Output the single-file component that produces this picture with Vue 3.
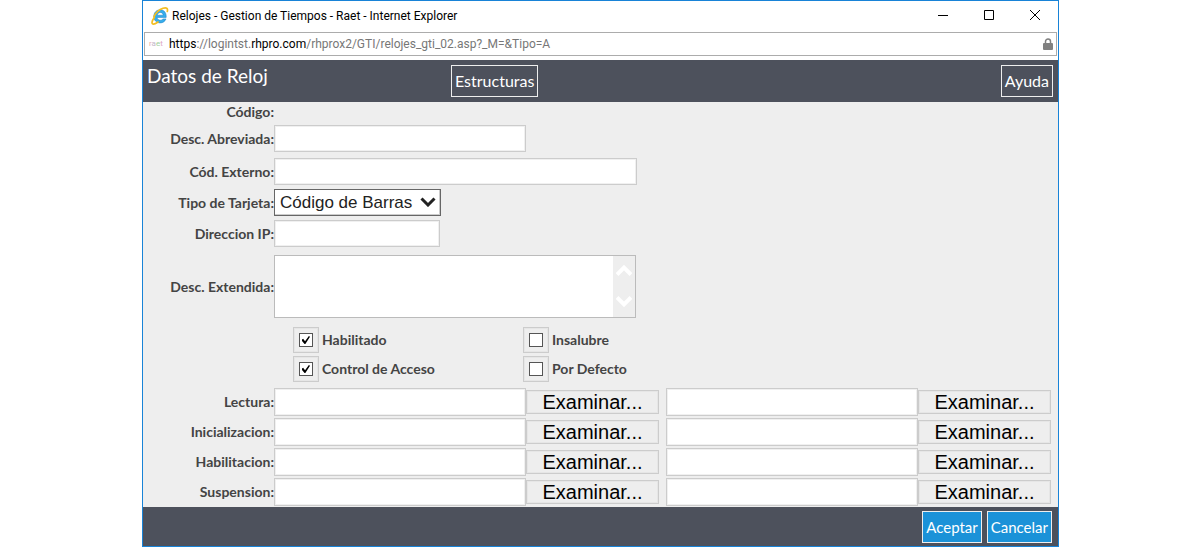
<script setup>
import { ref } from 'vue'

const form = ref({ abbr: '', external: '', card: 'Código de Barras', ip: '', extended: '' })

const checks = ref([
  [
    { id: 'habilitado', label: 'Habilitado', on: true },
    { id: 'insalubre', label: 'Insalubre', on: false },
  ],
  [
    { id: 'control', label: 'Control de Acceso', on: true },
    { id: 'defecto', label: 'Por Defecto', on: false },
  ],
])

const files = [
  { id: 'lectura', label: 'Lectura' },
  { id: 'inicializacion', label: 'Inicializacion' },
  { id: 'habilitacion', label: 'Habilitacion' },
  { id: 'suspension', label: 'Suspension' },
]
</script>

<template>
  <div class="desktop">
    <main class="window">
      <header class="titlebar">
        <svg class="ie" viewBox="0 0 18 18" aria-hidden="true">
          <path d="M15.2 10.4H6.1c.2 1.7 1.4 2.8 3.2 2.8 1.200 0 2.100-.4 2.700-1.300h3c-1 2.600-3.100 4-5.900 4-3.700 0-6.300-2.700-6.300-6.400 0-3.900 2.700-6.700 6.400-6.700 3.900 0 6.300 2.900 6 7.600zM6.200 8.200h6c-.2-1.700-1.300-2.700-3-2.700-1.600 0-2.700 1-3 2.700z" fill="#35aeec" stroke="#187bc0" stroke-width=".5" />
          <path d="M3.300 10.500C.8 14 .5 16.500 1.800 17c1.200.4 3.300-.7 5.200-2M3 9.500C5 5.500 8.500 2.500 12 1.300c3.300-1.100 5.200-.2 4.300 3.200" fill="none" stroke="#f3bd20" stroke-width="1.700" stroke-linecap="round" />
        </svg>
        <span class="caption">Relojes - Gestion de Tiempos - Raet - Internet Explorer</span>
        <button class="win" type="button" aria-label="Minimizar">
          <svg viewBox="0 0 12 12"><path d="M1 5.500h10" /></svg>
        </button>
        <button class="win" type="button" aria-label="Maximizar">
          <svg viewBox="0 0 12 12"><path d="M1.500 .5h9v9h-9z" /></svg>
        </button>
        <button class="win" type="button" aria-label="Cerrar">
          <svg viewBox="0 0 12 12"><path d="M1 0l10 10M11 0L1 10" /></svg>
        </button>
      </header>

      <div class="address">
        <span class="favicon"><i>r</i><b>a</b><u>e</u><s>t</s></span>
        <span class="url"><em>https</em>://logintst.<em>rhpro.com</em>/rhprox2/GTI/relojes_gti_02.asp?_M=&amp;Tipo=A</span>
        <svg class="lock" viewBox="0 0 10 12" aria-hidden="true">
          <path d="M2.500 6V3.500a2.500 2.500 0 0 1 5 0V6" fill="none" stroke="#808080" stroke-width="1.500" />
          <rect y="5" width="10" height="7" rx="1" fill="#808080" />
        </svg>
      </div>

      <div class="toolbar">
        <h1>Datos de Reloj</h1>
        <button class="outline" type="button">Estructuras</button>
        <button class="outline help" type="button">Ayuda</button>
      </div>

      <form class="form" @submit.prevent>
        <div class="row code"><span class="label">Código:</span></div>
        <div class="row abbr">
          <label class="label" for="abbr">Desc. Abreviada:</label>
          <input id="abbr" v-model="form.abbr" class="field medium" type="text" />
        </div>
        <div class="row">
          <label class="label" for="external">Cód. Externo:</label>
          <input id="external" v-model="form.external" class="field wide" type="text" />
        </div>
        <div class="row">
          <label class="label" for="card">Tipo de Tarjeta:</label>
          <div class="picker">
            <select id="card" v-model="form.card">
              <option>Código de Barras</option>
            </select>
            <svg viewBox="0 0 16 10" aria-hidden="true"><path d="M1.500 1.500L8 8l6.500-6.500" /></svg>
          </div>
        </div>
        <div class="row ip">
          <label class="label" for="ip">Direccion IP:</label>
          <input id="ip" v-model="form.ip" class="field small" type="text" />
        </div>
        <div class="row">
          <label class="label" for="extended">Desc. Extendida:</label>
          <div class="memo">
            <textarea id="extended" v-model="form.extended"></textarea>
            <div class="scroll" aria-hidden="true">
              <svg viewBox="0 0 16 13"><path d="M1 10.500L8 3.500l7 7" /></svg>
              <svg viewBox="0 0 16 13"><path d="M1 1.500l7 7 7-7" /></svg>
            </div>
          </div>
        </div>

        <div class="checks">
          <div v-for="(line, i) in checks" :key="i" class="line">
            <div v-for="c in line" :key="c.id" class="check">
              <input :id="c.id" v-model="c.on" type="checkbox" />
              <label :for="c.id">{{ c.label }}</label>
            </div>
          </div>
        </div>

        <div class="files">
          <div v-for="f in files" :key="f.id" class="row">
            <label class="label" :for="f.id">{{ f.label }}:</label>
            <div class="pair">
              <div class="file">
                <input :id="f.id" class="field" type="text" />
                <button type="button">Examinar...</button>
              </div>
              <div class="file">
                <input class="field" type="text" :aria-label="f.label" />
                <button type="button">Examinar...</button>
              </div>
            </div>
          </div>
        </div>
      </form>

      <footer class="footer">
        <button class="outline action" type="button">Aceptar</button>
        <button class="outline action" type="button">Cancelar</button>
      </footer>
    </main>
  </div>
</template>

<style>
body {
  margin: 0;
  background: #fff;
}
</style>

<style scoped>
* {
  box-sizing: border-box;
}
.desktop {
  padding: 0 141px 0 142px;
}
.window {
  border: 1px solid #1883d7;
  background: #fff;
  font-family: Lato, "Liberation Sans", sans-serif;
  color: #444;
}
button,
input,
select,
textarea {
  margin: 0;
  border-radius: 0;
  font-family: inherit;
}
.titlebar {
  display: flex;
  align-items: center;
  height: 31px;
  padding: 0 0 2px 8px;
  font-family: Roboto, sans-serif;
  font-size: 12px;
  color: #000;
}
.ie {
  width: 18px;
  height: 18px;
}
.caption {
  flex: 1;
  padding-left: 3px;
  white-space: nowrap;
}
.win {
  display: flex;
  align-items: center;
  justify-content: center;
  width: 46px;
  height: 28px;
  padding: 0;
  border: 0;
  background: none;
}
.win svg {
  width: 12px;
  height: 12px;
  fill: none;
  stroke: #000;
  stroke-width: 1;
}
.address {
  display: flex;
  align-items: center;
  height: 24px;
  margin: 0 1px 4px;
  padding: 0 3px 0 4px;
  border: 1px solid #acacac;
  font-family: Roboto, sans-serif;
  font-size: 12px;
  color: #777;
}
.favicon {
  width: 20px;
  font-size: 8px;
  line-height: 12px;
}
.favicon * {
  font-style: normal;
  font-weight: 400;
  text-decoration: none;
}
.favicon i { color: #e8a9a9; }
.favicon b { color: #c3b6c9; }
.favicon u { color: #9fcf9b; }
.favicon s { color: #e0a6c4; }
.url {
  flex: 1;
  white-space: nowrap;
}
.url em {
  font-style: normal;
  color: #000;
}
.lock {
  width: 10px;
  height: 12px;
}
.toolbar {
  display: flex;
  align-items: flex-start;
  height: 42px;
  padding: 5px 5px 0 4px;
  background: #4d515c;
}
h1 {
  width: 304px;
  margin: 0;
  font-size: 19px;
  font-weight: 400;
  line-height: 22px;
  color: #fff;
}
.outline {
  height: 32px;
  padding: 0 3px;
  border: 1px solid #eee;
  background: none;
  font-size: 16px;
  line-height: 30px;
  color: #fff;
}
.help {
  margin-left: auto;
}
.form {
  padding-bottom: 1px;
  background: #eee;
}
.row {
  display: flex;
  align-items: center;
  margin-bottom: 4px;
}
.code {
  height: 20px;
  margin-bottom: 3px;
}
.abbr {
  margin-bottom: 6px;
}
.ip {
  margin-bottom: 8px;
}
.label {
  flex: none;
  width: 131px;
  text-align: right;
  white-space: nowrap;
}
.label,
.check label {
  font-size: 14px;
  font-weight: 700;
  line-height: 18px;
}
.field {
  height: 27px;
  padding: 0 4px;
  border: 1px solid #ccc;
  background: #fff;
  box-shadow: inset 0 0 0 1px #f0f0f0;
  font-size: 16px;
}
.small { width: 166px; }
.medium { width: 252px; }
.wide { width: 363px; }
.picker {
  position: relative;
}
.picker select {
  display: block;
  width: 167px;
  height: 27px;
  padding: 0 0 0 5px;
  border: 1px solid #666;
  appearance: none;
  background: #fff;
  box-shadow: inset -1px -1px 0 #ccc;
  font-family: "Liberation Sans", sans-serif;
  font-size: 17px;
  color: #222;
}
.picker svg {
  position: absolute;
  top: 8px;
  right: 5px;
  width: 16px;
  height: 10px;
  fill: none;
  stroke: #222;
  stroke-width: 3;
  pointer-events: none;
}
.memo {
  display: flex;
  width: 362px;
  height: 63px;
  border: 1px solid #bbb;
  background: #fff;
}
.memo textarea {
  flex: 1;
  min-width: 0;
  border: 0;
  background: none;
  resize: none;
}
.scroll {
  display: flex;
  flex-direction: column;
  justify-content: space-between;
  align-items: center;
  width: 22px;
  padding: 8px 0;
  background: #eee;
}
.scroll svg {
  width: 16px;
  height: 13px;
  fill: none;
  stroke: #fff;
  stroke-width: 4;
}
.checks {
  display: flex;
  flex-direction: column;
  gap: 3px;
  margin: 9px 0 6px;
  padding-left: 150px;
}
.line {
  display: flex;
}
.check {
  display: flex;
  align-items: center;
  gap: 3px;
  width: 230px;
}
.check input {
  display: grid;
  place-items: center;
  width: 26px;
  height: 26px;
  border: 1px solid #ccc;
  appearance: none;
  background: #eee;
  box-shadow: inset 0 0 0 1px #e6e6e6;
}
.check input::before {
  content: "";
  grid-area: 1 / 1;
  width: 14px;
  height: 14px;
  border: 1px solid #555;
  background: #fff;
  box-sizing: border-box;
}
.check input:checked::after {
  content: "";
  grid-area: 1 / 1;
  width: 8px;
  height: 8px;
  background: #000;
  clip-path: polygon(0 45%, 14% 35%, 38% 65%, 86% 0, 100% 10%, 42% 100%, 32% 100%, 0 62%);
}
.files {
  display: flex;
  flex-direction: column;
  gap: 2px;
}
.files .row {
  margin: 0;
}
.pair {
  display: flex;
  flex: 1;
  gap: 7px;
  padding-right: 7px;
}
.file {
  display: flex;
  flex: 1;
  align-items: center;
}
.file .field {
  flex: 1;
  min-width: 0;
  height: 28px;
}
.file button {
  width: 133px;
  height: 24px;
  padding: 0;
  border: 1px solid #ccc;
  background: #eee;
  box-shadow: inset 0 0 0 1px #e6e6e6;
  font-family: "Liberation Sans", sans-serif;
  font-size: 20px;
  line-height: 22px;
  color: #000;
}
.footer {
  display: flex;
  justify-content: flex-end;
  gap: 5px;
  height: 39px;
  padding: 4px 6px 0;
  background: #4d515c;
}
.action {
  background: #1b92d8;
  font-size: 15px;
}
</style>
